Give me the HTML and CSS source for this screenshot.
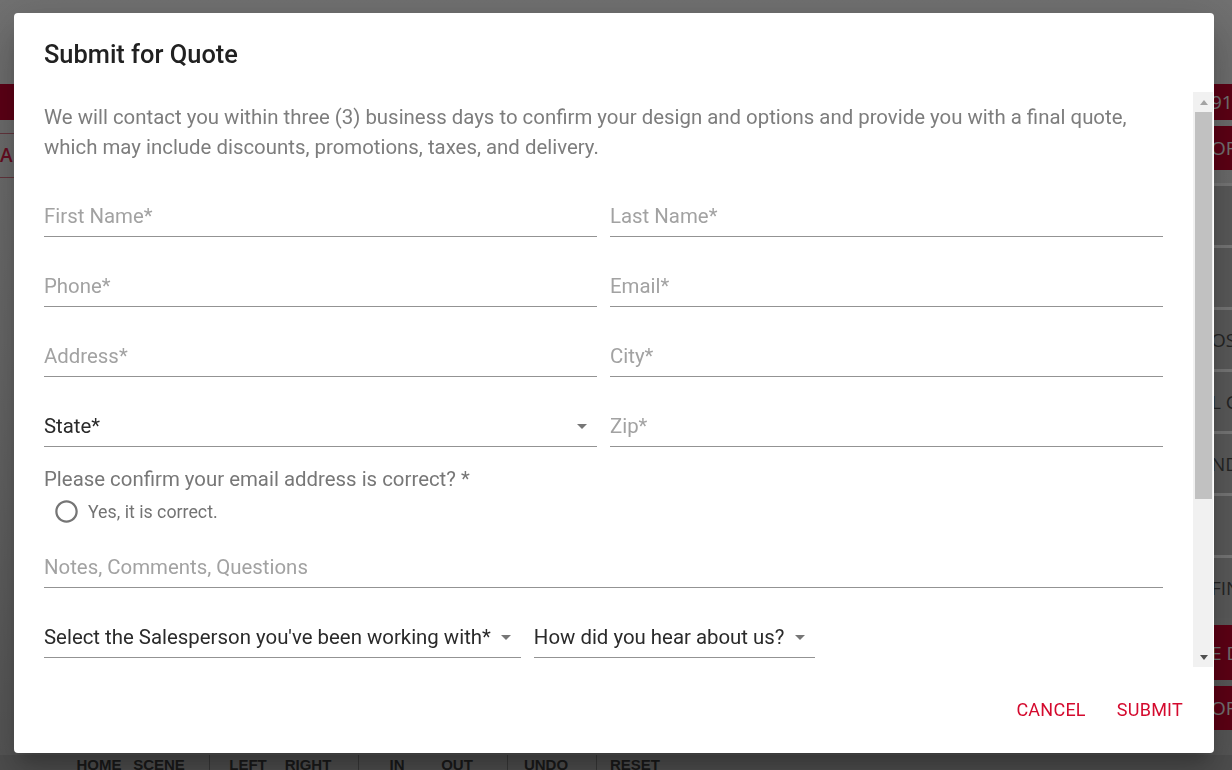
FILE: index.html
```html
<!DOCTYPE html>
<html lang="en">
<head>
<meta charset="utf-8">
<title>Submit for Quote</title>
<link rel="stylesheet" href="styles.css">
</head>
<body>
<div class="app">
  <div class="app-top"></div>
  <div class="app-middle">
    <aside class="left-panel">
      <div class="lp-bar"></div>
      <div class="lp-tab">AR</div>
    </aside>
    <main class="stage"></main>
    <aside class="right-panel">
      <div class="rp-red rp-red-1"><span>91</span></div>
      <div class="rp-red rp-red-2"><span>OR</span></div>
      <div class="rp-space"></div>
      <div class="rp-row"><span></span></div>
      <div class="rp-row"><span></span></div>
      <div class="rp-row"><span>OS</span></div>
      <div class="rp-row"><span>L C</span></div>
      <div class="rp-row"><span>ND</span></div>
      <div class="rp-row"><span></span></div>
      <div class="rp-row rp-row-last"><span>FIN</span></div>
      <div class="rp-red rp-red-3"><span>E D</span></div>
      <div class="rp-red rp-red-4"><span>OR</span></div>
    </aside>
  </div>
  <div class="toolbar">
    <div class="tb-group tb-first"><span class="tb-item">HOME</span><span class="tb-item">SCENE</span></div>
    <div class="tb-group"><span class="tb-item">LEFT</span><span class="tb-item">RIGHT</span></div>
    <div class="tb-group"><span class="tb-item">IN</span><span class="tb-item">OUT</span></div>
    <div class="tb-group"><span class="tb-item">UNDO</span></div>
    <div class="tb-group"><span class="tb-item">RESET</span></div>
  </div>
</div>

<div class="backdrop">
  <div class="dialog" role="dialog" aria-labelledby="dlg-title">
    <h2 class="dialog-title" id="dlg-title">Submit for Quote</h2>
    <div class="dialog-body">
      <div class="dialog-content">
        <p class="intro">We will contact you within three (3) business days to confirm your design and options and provide you with a final quote, which may include discounts, promotions, taxes, and delivery.</p>

        <div class="row row-first">
          <div class="field"><span class="placeholder">First Name*</span></div>
          <div class="field"><span class="placeholder">Last Name*</span></div>
        </div>
        <div class="row">
          <div class="field"><span class="placeholder">Phone*</span></div>
          <div class="field"><span class="placeholder">Email*</span></div>
        </div>
        <div class="row">
          <div class="field"><span class="placeholder">Address*</span></div>
          <div class="field"><span class="placeholder">City*</span></div>
        </div>
        <div class="row">
          <div class="field select-field"><span class="value">State*</span>
            <svg class="drop" viewBox="0 0 24 24" width="24" height="24"><path d="M7 10l5 5 5-5z"/></svg>
          </div>
          <div class="field"><span class="placeholder">Zip*</span></div>
        </div>

        <div class="question">Please confirm your email address is correct? *</div>
        <label class="radio-row">
          <svg class="radio" viewBox="0 0 24 24" width="27" height="27"><path d="M12 2C6.48 2 2 6.480 2 12s4.48 10 10 10 10-4.48 10-10S17.52 2 12 2zm0 18c-4.42 0-8-3.58-8-8s3.58-8 8-8 8 3.58 8 8-3.58 8-8 8z"/></svg>
          <span class="radio-label">Yes, it is correct.</span>
        </label>

        <div class="field field-notes"><span class="placeholder">Notes, Comments, Questions</span></div>

        <div class="row-inline">
          <div class="field select-field select-inline"><span class="value">Select the Salesperson you've been working with*</span>
            <svg class="drop" viewBox="0 0 24 24" width="24" height="24"><path d="M7 10l5 5 5-5z"/></svg>
          </div>
          <div class="field select-field select-inline"><span class="value">How did you hear about us?</span>
            <svg class="drop" viewBox="0 0 24 24" width="24" height="24"><path d="M7 10l5 5 5-5z"/></svg>
          </div>
        </div>
      </div>
      <div class="scrollbar">
        <div class="sb-btn"><svg viewBox="0 0 8 5" width="8" height="5"><path class="sb-up" d="M0 5L4 0L8 5z"/></svg></div>
        <div class="sb-track"><div class="sb-thumb"></div></div>
        <div class="sb-btn"><svg viewBox="0 0 8 5" width="8" height="5"><path class="sb-down" d="M0 0L8 0L4 5z"/></svg></div>
      </div>
    </div>
    <div class="dialog-actions">
      <button class="btn" type="button">Cancel</button>
      <button class="btn" type="button">Submit</button>
    </div>
  </div>
</div>
</body>
</html>
```

FILE: styles.css
```css
* { box-sizing: border-box; }

html, body {
  margin: 0;
  padding: 0;
  height: 770px;
  overflow: hidden;
}

body {
  font-family: Roboto, "Liberation Sans", sans-serif;
  background: #d8d8d8;
}

/* ---------- background application ---------- */
.app {
  display: grid;
  grid-template-rows: 84px 671px 45px;
  height: 800px;
  background: linear-gradient(180deg, #e2e2e2 0%, #cfcfcf 45%, #a8a8a8 100%);
}

.app-middle {
  display: flex;
}

.left-panel {
  width: 160px;
  display: flex;
  flex-direction: column;
}

.lp-bar {
  height: 36px;
  background: #bc002c;
}

.lp-tab {
  margin-top: 13px;
  height: 45px;
  border-top: 1px solid #c96b7c;
  border-bottom: 1px solid #c96b7c;
  color: #cf1a44;
  font-family: "Open Sans", Roboto, sans-serif;
  font-size: 19px;
  font-weight: 600;
  line-height: 43px;
  letter-spacing: 0.5px;
}

.stage { flex: 1; }

.right-panel {
  width: 160px;
  display: flex;
  flex-direction: column;
  font-family: "Open Sans", Roboto, sans-serif;
  font-size: 19px;
}

.right-panel span {
  display: block;
  padding-left: 139px;
  white-space: nowrap;
}

.rp-red {
  background: #bd0029;
  color: #e8e8e8;
  display: flex;
  align-items: center;
}
.rp-red-1 { height: 36px; }
.rp-red-2 { height: 44px; margin-top: 6px; }
.rp-red-3 { height: 55px; margin-top: 7px; }
.rp-red-4 { height: 44px; margin-top: 6px; }

.rp-space { height: 13px; }

.rp-row {
  height: 62px;
  background: #b6b6b6;
  border-top: 3px solid #f0f0f0;
  color: #4a4a4a;
  display: flex;
  align-items: center;
}
.rp-row-last { height: 63px; }

.toolbar {
  display: flex;
  align-items: flex-start;
  padding-left: 61px;
  background: #9c9c9c;
  font-family: "Liberation Sans Narrow", "Liberation Sans", sans-serif;
  font-weight: 700;
  font-size: 15px;
  color: #333;
}

.tb-group {
  display: flex;
  padding: 0 20px 0 8px;
  border-left: 1px solid #707070;
  height: 45px;
}
.tb-group.tb-first { border-left: 0; }

.tb-item {
  width: 60px;
  text-align: center;
  line-height: 20px;
}

/* ---------- modal ---------- */
.backdrop {
  position: fixed;
  inset: 0;
  background: rgba(0, 0, 0, 0.5);
  display: flex;
  align-items: flex-start;
  padding: 13px 0 0 14px;
}

.dialog {
  width: 1200px;
  height: 740px;
  background: #fff;
  border-radius: 4px;
  box-shadow: 0 11px 15px -7px rgba(0,0,0,0.2), 0 24px 38px 3px rgba(0,0,0,0.14), 0 9px 46px 8px rgba(0,0,0,0.12);
  display: flex;
  flex-direction: column;
  overflow: hidden;
}

.dialog-title {
  margin: 0;
  height: 79px;
  padding: 25px 30px 0;
  font-size: 25.4px;
  font-weight: 500;
  line-height: 32px;
  color: #212121;
}

.dialog-body {
  height: 575px;
  display: flex;
}

.dialog-content {
  flex: 1;
  overflow: hidden;
  padding: 10px 30px 0;
}

.intro {
  margin: 0;
  font-size: 20.4px;
  line-height: 30px;
  color: #7d7d7d;
}

.row {
  display: grid;
  grid-template-columns: 1fr 1fr;
  column-gap: 13px;
  margin-top: 21px;
}
.row.row-first { margin-top: 26px; }

.field {
  display: flex;
  align-items: flex-start;
  padding: 16px 0 8px;
  line-height: 24px;
  font-size: 20.4px;
  border-bottom: 1px solid #939393;
}

.placeholder { color: #a2a2a2; }

.value { color: #2a2a2a; }

.select-field {
  justify-content: space-between;
  padding-right: 3px;
}

.drop {
  fill: #767676;
  flex: none;
}

.question {
  margin-top: 20px;
  font-size: 20.4px;
  line-height: 24px;
  color: #777;
}

.radio-row {
  margin-top: 6px;
  height: 28px;
  display: flex;
  align-items: center;
  padding-left: 9px;
}

.radio {
  fill: #757575;
  flex: none;
}

.radio-label {
  margin-left: 8px;
  font-size: 17.8px;
  color: #737373;
}

.field-notes { margin-top: 14px; }

.row-inline {
  display: flex;
  column-gap: 13px;
  margin-top: 21px;
}

.select-inline .drop { margin-left: 3px; }

/* fake scrollbar of the scrolling content */
.scrollbar {
  width: 20px;
  margin-right: 1px;
  background: #f1f1f1;
  display: flex;
  flex-direction: column;
}

.sb-btn {
  height: 20px;
  display: flex;
  align-items: center;
  justify-content: center;
  padding-left: 2px;
}

.sb-up { fill: #a3a3a3; }
.sb-down { fill: #505050; }

.sb-track {
  flex: 1;
  padding: 0 1px 0 2px;
}

.sb-thumb {
  height: 387px;
  background: #c1c1c1;
}

.dialog-actions {
  flex: 1;
  display: flex;
  justify-content: flex-end;
  align-items: center;
  padding-right: 23px;
  gap: 15px;
}

.btn {
  border: 0;
  background: transparent;
  padding: 6px 8px;
  font-family: Roboto, "Liberation Sans", sans-serif;
  font-size: 18px;
  font-weight: 400;
  letter-spacing: 0.25px;
  text-transform: uppercase;
  color: #d40a2e;
  line-height: 24px;
  cursor: pointer;
}
```
